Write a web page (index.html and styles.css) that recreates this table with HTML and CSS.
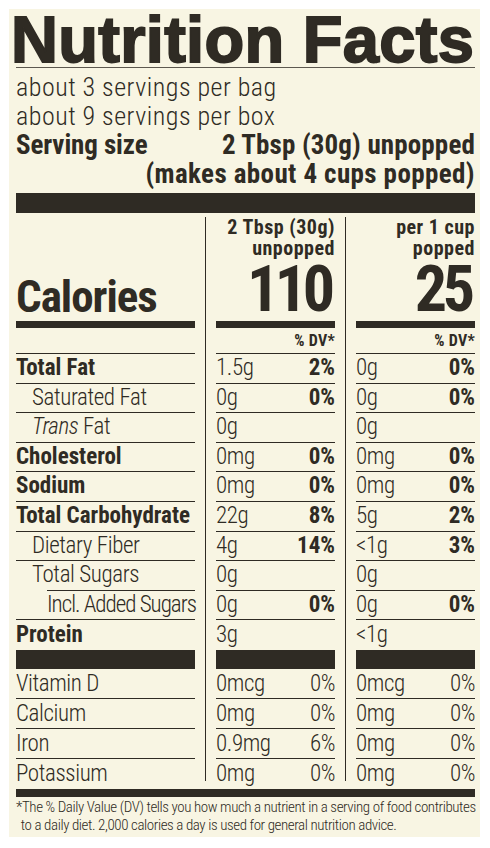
FILE: index.html
```html
<!DOCTYPE html>
<html lang="en">
<head>
<meta charset="utf-8">
<title>Nutrition Facts</title>
<link rel="stylesheet" href="styles.css">
</head>
<body>
<div class="label">
  <h1 class="title">Nutrition Facts</h1>
  <div class="servings">
    <p class="line">about 3 servings per bag</p>
    <p class="line">about 9 servings per box</p>
    <p class="line size"><span class="size-name">Serving size</span><span class="size-amt">2 Tbsp (30g) unpopped</span></p>
    <p class="line size-sub">(makes about 4 cups popped)</p>
  </div>
  <div class="bar bar-top"></div>
  <div class="facts">
    <div class="vline v1"></div>
    <div class="vline v2"></div>

    <div class="c1 head head-label"><span class="cal">Calories</span></div>
    <div class="c2 head"><div class="serv">2 Tbsp (30g)<br>unpopped</div><div class="kcal">110</div></div>
    <div class="c3 head"><div class="serv">per 1 cup<br>popped</div><div class="kcal">25</div></div>

    <div class="c1 bar bar-cal"></div>
    <div class="c2 bar bar-cal"></div>
    <div class="c3 bar bar-cal"></div>

    <div class="c1 dvh"></div>
    <div class="c2 dvh">% DV*</div>
    <div class="c3 dvh">% DV*</div>

    <div class="c1 cell b">Total Fat</div>
    <div class="c2 cell val"><span>1.5g</span><span class="b">2%</span></div>
    <div class="c3 cell val"><span>0g</span><span class="b">0%</span></div>

    <div class="c1 cell i1">Saturated Fat</div>
    <div class="c2 cell val"><span>0g</span><span class="b">0%</span></div>
    <div class="c3 cell val"><span>0g</span><span class="b">0%</span></div>

    <div class="c1 cell i1"><i>Trans</i> Fat</div>
    <div class="c2 cell val"><span>0g</span><span></span></div>
    <div class="c3 cell val"><span>0g</span><span></span></div>

    <div class="c1 cell b">Cholesterol</div>
    <div class="c2 cell val"><span>0mg</span><span class="b">0%</span></div>
    <div class="c3 cell val"><span>0mg</span><span class="b">0%</span></div>

    <div class="c1 cell b">Sodium</div>
    <div class="c2 cell val"><span>0mg</span><span class="b">0%</span></div>
    <div class="c3 cell val"><span>0mg</span><span class="b">0%</span></div>

    <div class="c1 cell b">Total Carbohydrate</div>
    <div class="c2 cell val"><span>22g</span><span class="b">8%</span></div>
    <div class="c3 cell val"><span>5g</span><span class="b">2%</span></div>

    <div class="c1 cell i1">Dietary Fiber</div>
    <div class="c2 cell val"><span>4g</span><span class="b">14%</span></div>
    <div class="c3 cell val"><span>&lt;1g</span><span class="b">3%</span></div>

    <div class="c1 cell i1 rule-in">Total Sugars</div>
    <div class="c2 cell val"><span>0g</span><span></span></div>
    <div class="c3 cell val"><span>0g</span><span></span></div>

    <div class="c1 cell i2 tight">Incl. Added Sugars</div>
    <div class="c2 cell val"><span>0g</span><span class="b">0%</span></div>
    <div class="c3 cell val"><span>0g</span><span class="b">0%</span></div>

    <div class="c1 cell last b">Protein</div>
    <div class="c2 cell last val"><span>3g</span><span></span></div>
    <div class="c3 cell last val"><span>&lt;1g</span><span></span></div>

    <div class="c1 bar bar-mid"></div>
    <div class="c2 bar bar-mid"></div>
    <div class="c3 bar bar-mid"></div>

    <div class="c1 cell vit">Vitamin D</div>
    <div class="c2 cell vit val"><span>0mcg</span><span>0%</span></div>
    <div class="c3 cell vit val"><span>0mcg</span><span>0%</span></div>

    <div class="c1 cell vit">Calcium</div>
    <div class="c2 cell vit val"><span>0mg</span><span>0%</span></div>
    <div class="c3 cell vit val"><span>0mg</span><span>0%</span></div>

    <div class="c1 cell vit">Iron</div>
    <div class="c2 cell vit val"><span>0.9mg</span><span>6%</span></div>
    <div class="c3 cell vit val"><span>0mg</span><span>0%</span></div>

    <div class="c1 cell vit last">Potassium</div>
    <div class="c2 cell vit last val"><span>0mg</span><span>0%</span></div>
    <div class="c3 cell vit last val"><span>0mg</span><span>0%</span></div>
  </div>
  <div class="bar bar-foot"></div>
  <p class="foot">*The % Daily Value (DV) tells you how much a nutrient in a serving of food contributes<br>to a daily diet. 2,000 calories a day is used for general nutrition advice.</p>
</div>
</body>
</html>
```

FILE: styles.css
```css
* {
  box-sizing: border-box;
  margin: 0;
  padding: 0;
}

html,
body {
  background: #ffffff;
}

.label {
  width: 471px;
  margin: 9px 0 0 9px;
  padding: 4.5px 5px 2.6px 7px;
  background: #f8f5e3;
  color: #2f2b24;
  font-family: Roboto, "Roboto Condensed", sans-serif;
  font-stretch: 75%;
  font-weight: 300;
}

.title {
  font-family: "Liberation Sans", Arial, sans-serif;
  font-stretch: 100%;
  font-weight: 700;
  font-size: 65px;
  line-height: 52px;
  letter-spacing: 0.3px;
  text-indent: -5px;
  padding-bottom: 1.5px;
  border-bottom: 1px solid #5d584f;
  -webkit-text-stroke: 1.8px #2f2b24;
  white-space: nowrap;
}

.servings {
  padding-top: 4.5px;
}

.line {
  font-size: 26px;
  line-height: 29px;
  letter-spacing: 0.5px;
  white-space: nowrap;
}

.size {
  display: flex;
  justify-content: space-between;
  font-weight: 700;
  font-size: 27px;
}

.size-name {
  letter-spacing: -0.1px;
}

.size-amt {
  letter-spacing: 0.15px;
}

.size-sub {
  font-weight: 700;
  font-size: 27px;
  letter-spacing: 0.4px;
  text-align: right;
}

.bar {
  background: #2f2b24;
}

.bar-top {
  margin-top: 4.5px;
  height: 20px;
}

.facts {
  display: grid;
  grid-template-columns: 179px 21px 119px 21px 119px;
}

.vline {
  grid-row: 1 / span 18;
  justify-self: center;
  width: 1.4px;
  margin: 4px 0 8px;
  background: #2f2b24;
}

.v1 {
  grid-column: 2;
}

.v2 {
  grid-column: 4;
}

.c1 {
  grid-column: 1;
}

.c2 {
  grid-column: 3;
}

.c3 {
  grid-column: 5;
}

.head {
  height: 108px;
  display: flex;
  flex-direction: column;
  justify-content: flex-end;
  align-items: flex-end;
  text-align: right;
  font-weight: 700;
  white-space: nowrap;
}

.head-label {
  align-items: flex-start;
}

.cal {
  font-size: 45px;
  line-height: 44px;
  letter-spacing: -1px;
  padding-bottom: 2px;
}

.serv {
  font-size: 20px;
  line-height: 21px;
  letter-spacing: 0.5px;
}

.kcal {
  font-size: 64px;
  line-height: 56px;
  letter-spacing: -4.5px;
  margin-top: 3px;
  padding: 0 4.5px 3px 0;
}

.bar-cal {
  height: 7px;
}

.dvh {
  height: 26px;
  border-bottom: 1px solid #2f2b24;
  font-weight: 700;
  font-size: 16px;
  line-height: 25px;
  letter-spacing: 0.3px;
  text-align: right;
}

.cell {
  height: 29.6px;
  line-height: 28.6px;
  font-size: 23px;
  letter-spacing: -0.4px;
  border-bottom: 1px solid #2f2b24;
  white-space: nowrap;
}

.cell.last {
  border-bottom: none;
  line-height: 29.6px;
}

.cell.vit {
  height: 30px;
  line-height: 29px;
}

.cell.vit.last {
  line-height: 30px;
}

.val {
  display: flex;
  justify-content: space-between;
}

.b {
  font-weight: 700;
  letter-spacing: 0;
}

.i1 {
  padding-left: 16px;
}

.i2 {
  padding-left: 31px;
}

.rule-in {
  margin-left: 31px;
  padding-left: 0;
  text-indent: -15px;
}

.tight {
  letter-spacing: -1px;
}

.bar-mid {
  height: 19px;
}

.bar-foot {
  height: 8px;
}

.foot {
  margin-top: 2.4px;
  font-size: 15px;
  line-height: 17.5px;
  letter-spacing: -0.42px;
  padding-left: 4.8px;
  text-indent: -4.8px;
  white-space: nowrap;
}
```
